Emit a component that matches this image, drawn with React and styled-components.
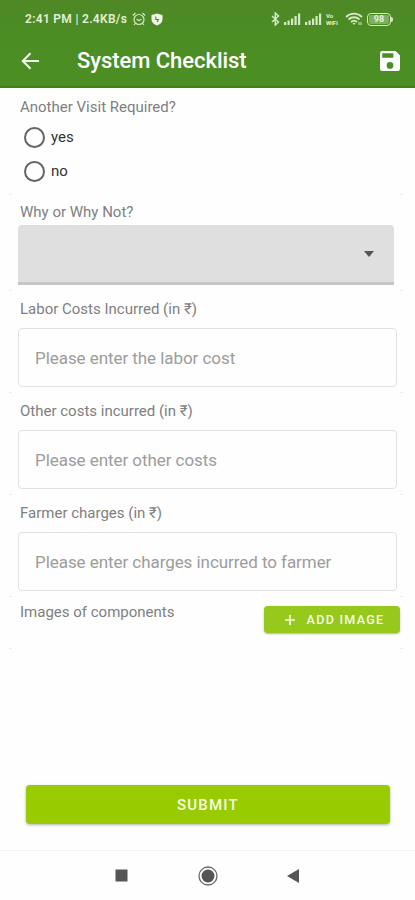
import styled, { createGlobalStyle } from 'styled-components';

const GlobalStyle = createGlobalStyle`
  * {
    box-sizing: border-box;
  }

  body {
    margin: 0;
    background-color: #fefefe;
    font-family: Roboto, 'Noto Sans', sans-serif;
  }
`;

const Screen = styled.div`
  display: flex;
  flex-direction: column;
  width: 415px;
  height: 900px;
  overflow: hidden;
`;

const Header = styled.header`
  flex: none;
  height: 88px;
  background: linear-gradient(#4e8825, #4b8d23 40px, #4b8f23);
  border-bottom: 2px solid #3f8210;
  color: #fff;
`;

const StatusBar = styled.div`
  display: flex;
  align-items: center;
  justify-content: space-between;
  height: 38px;
  padding: 0 22px 0 25px;
  color: #e3f0d6;
`;

const StatusGroup = styled.div`
  display: flex;
  align-items: center;
  gap: ${(props) => props.$gap}px;
`;

const Clock = styled.span`
  width: 102px;
  font-size: 12px;
  font-weight: 600;
  line-height: 14px;
  letter-spacing: 0.3px;
  white-space: nowrap;
`;

const NetLabel = styled.span`
  display: flex;
  flex-direction: column;
  width: 15px;
  font-size: 6px;
  font-weight: 700;
  line-height: 7px;
`;

const Battery = styled.span`
  display: flex;
  align-items: center;
  justify-content: center;
  width: 24px;
  height: 13px;
  border: 1.5px solid #d5e8c4;
  border-radius: 4px;
  background-color: #7fae5d;
  background-clip: content-box;
  padding: 1px;
  font-size: 9px;
  font-weight: 700;
  line-height: 8px;
`;

const BatteryWrap = styled.span`
  display: flex;
  align-items: center;

  &::after {
    content: '';
    width: 2px;
    height: 5px;
    border-radius: 0 2px 2px 0;
    background-color: #d5e8c4;
  }
`;

const Toolbar = styled.div`
  display: flex;
  align-items: center;
  height: 45px;
  padding: 0 15px 0 21px;
`;

const Title = styled.h1`
  flex: 1;
  margin: 0 0 0 37px;
  font-size: 22px;
  font-weight: 500;
  line-height: 28px;
  letter-spacing: -0.05px;
  white-space: nowrap;
`;

const Form = styled.main`
  flex: none;
  padding: 1px 12px 0 9px;
`;

const Card = styled.section`
  position: relative;
  height: ${(props) => props.$height}px;
  padding: ${(props) => props.$top}px 0 0 9px;

  &::before,
  &::after {
    content: '';
    position: absolute;
    bottom: 0;
    width: 3px;
    height: 1px;
    background-color: #ededed;
  }

  &::before {
    left: 0;
  }

  &::after {
    right: 0;
  }
`;

const Label = styled.div`
  padding-left: 2px;
  color: #7f7f7f;
  font-size: 15px;
  line-height: 18px;
  white-space: nowrap;
`;

const Options = styled.div`
  padding-top: 4px;
`;

const Option = styled.label`
  display: flex;
  align-items: center;
  height: 34px;
  padding-left: 6px;
  color: #333;
  font-size: 15px;
`;

const Radio = styled.span`
  width: 21px;
  height: 21px;
  margin-right: 6px;
  border: 2px solid #646464;
  border-radius: 50%;
`;

const Select = styled.div`
  display: flex;
  align-items: center;
  justify-content: flex-end;
  width: 376px;
  height: 60px;
  margin-top: 4px;
  padding-right: 20px;
  border-bottom: 3px solid #c6c6c6;
  border-radius: 4px 4px 0 0;
  background-color: #dfdfdf;
`;

const Field = styled.div`
  display: flex;
  align-items: center;
  width: 379px;
  height: 59px;
  margin-top: 10px;
  padding-left: 16px;
  border: 1px solid #e1e1e1;
  border-radius: 4px;
  color: #9c9c9c;
  font-size: 17px;
  letter-spacing: -0.06px;
  white-space: nowrap;
`;

const ImagesRow = styled.div`
  display: flex;
  justify-content: space-between;
  padding-right: 3px;
`;

const Button = styled.button`
  display: flex;
  align-items: center;
  justify-content: center;
  border: 0;
  border-radius: 4px;
  color: #f6fbe4;
  font-family: inherit;
  font-weight: 500;
  white-space: nowrap;
`;

const AddButton = styled(Button)`
  width: 136px;
  height: 27px;
  margin-top: 3px;
  gap: 12px;
  padding: 0 0 0 5px;
  background-color: #96c91c;
  box-shadow: 0 1px 2px rgba(0, 0, 0, 0.3);
  font-size: 12.5px;
  letter-spacing: 1.3px;
`;

const SubmitButton = styled(Button)`
  flex: none;
  width: 364px;
  height: 39px;
  margin: auto 0 26px 26px;
  background-color: #98cb00;
  box-shadow: 0 1px 3px rgba(0, 0, 0, 0.3);
  font-size: 15px;
  letter-spacing: 1.2px;
`;

const NavBar = styled.nav`
  display: flex;
  flex: none;
  align-items: center;
  height: 50px;
  padding-left: 115px;
  border-top: 1px solid #f3f3f3;
`;

const NavIcon = styled.svg`
  margin-right: ${(props) => props.$after || 0}px;
`;

const Signal = () => (
  <svg width="17" height="12" viewBox="0 0 17 12" fill="#d5e8c4">
    <path d="M0 9h2.2v3H0zM3.500 7.500h2.200V12H3.500zM7 5.500h2.200V12H7zM10.500 3h2.200v9h-2.200zM14 .500h2.200V12H14z" />
  </svg>
);

const fields = [
  {
    label: 'Labor Costs Incurred (in ₹)',
    placeholder: 'Please enter the labor cost',
  },
  { label: 'Other costs incurred (in ₹)', placeholder: 'Please enter other costs' },
  {
    label: 'Farmer charges (in ₹)',
    placeholder: 'Please enter charges incurred to farmer',
  },
];

export default function App() {
  return (
    <Screen>
      <GlobalStyle />
      <Header>
        <StatusBar>
          <StatusGroup $gap={5}>
            <Clock>2:41 PM | 2.4KB/s</Clock>
            <svg width="14" height="14" viewBox="0 0 14 14" fill="none" stroke="#d5e8c4" strokeWidth="1.2">
              <circle cx="7" cy="7.5" r="5" />
              <path d="M4.500 7.200 7 8.500l2.500-1.300M.8 3.500 3.500 1M13.200 3.500 10.500 1M3.200 11.500 2 13M10.800 11.500 12 13" />
            </svg>
            <svg width="12" height="13" viewBox="0 0 12 13">
              <path d="M6 .5 11.500 2v4.500c0 3-2.500 5-5.500 6-3-1-5.500-3-5.500-6V2z" fill="#eef6e6" />
              <path d="M4.800 3.500v3h2.700L6 9" fill="none" stroke="#4b8d23" strokeWidth="1.1" />
            </svg>
          </StatusGroup>
          <StatusGroup $gap={4}>
            <svg width="9" height="14" viewBox="0 0 9 14" fill="none" stroke="#d5e8c4" strokeWidth="1.5">
              <path d="m1 4 6.500 6L4.300 13V1l3.200 3L1 10" />
            </svg>
            <Signal />
            <Signal />
            <NetLabel>
              <span>Vo</span>
              <span>WiFi</span>
            </NetLabel>
            <svg width="18" height="14" viewBox="0 0 18 14" fill="none" stroke="#d5e8c4" strokeWidth="1.8">
              <path d="M1 5c4.500-4.500 11.500-4.500 16 0M3.500 7.500c3.200-3 7.800-3 11 0M6 10c2-1.700 4-1.700 6 0" />
              <path d="m7.500 11 1.500 2 1.500-2z" fill="#d5e8c4" stroke="none" />
              <path d="M14 10v3M16 10v3" strokeWidth="1" />
            </svg>
            <BatteryWrap>
              <Battery>98</Battery>
            </BatteryWrap>
          </StatusGroup>
        </StatusBar>
        <Toolbar>
          <svg width="19" height="18" viewBox="0 0 19 18" fill="none" stroke="#f7fbf3" strokeWidth="2">
            <path d="M18 9H2M9.500 1.300 1.800 9l7.700 7.700" />
          </svg>
          <Title>System Checklist</Title>
          <svg width="20" height="20" viewBox="3 3 18 18" fill="#fff">
            <path d="M17 3H5a2 2 0 0 0-2 2v14a2 2 0 0 0 2 2h14a2 2 0 0 0 2-2V7zm-5 16a3 3 0 1 1 0-6 3 3 0 0 1 0 6zm3-10H5V5h10z" />
          </svg>
        </Toolbar>
      </Header>

      <Form>
        <Card $height={106} $top={9}>
          <Label>Another Visit Required?</Label>
          <Options>
            <Option>
              <Radio />
              yes
            </Option>
            <Option>
              <Radio />
              no
            </Option>
          </Options>
        </Card>
        <Card $height={96} $top={8}>
          <Label>Why or Why Not?</Label>
          <Select>
            <svg width="10" height="6" viewBox="0 0 10 6">
              <path d="M0 0h10L5 6z" fill="#555" />
            </svg>
          </Select>
        </Card>
        {fields.map((field) => (
          <Card key={field.label} $height={102} $top={9}>
            <Label>{field.label}</Label>
            <Field>{field.placeholder}</Field>
          </Card>
        ))}
        <Card $height={52} $top={6}>
          <ImagesRow>
            <Label>Images of components</Label>
            <AddButton>
              <svg width="10" height="10" viewBox="0 0 10 10" stroke="#f6fbe4" strokeWidth="1.7">
                <path d="M5 0v10M0 5h10" />
              </svg>
              ADD IMAGE
            </AddButton>
          </ImagesRow>
        </Card>
      </Form>

      <SubmitButton>SUBMIT</SubmitButton>

      <NavBar>
        <NavIcon $after={70} width="13" height="13" viewBox="0 0 13 13">
          <path d="M.5.500h12v12H.500z" fill="#555" />
        </NavIcon>
        <NavIcon $after={69} width="20" height="20" viewBox="0 0 20 20">
          <circle cx="10" cy="10" r="9" fill="none" stroke="#6a6a6a" strokeWidth="1.3" />
          <circle cx="10" cy="10" r="6.5" fill="#555" />
        </NavIcon>
        <NavIcon width="12" height="14" viewBox="0 0 12 14">
          <path d="M12 0v14L0 7z" fill="#555" />
        </NavIcon>
      </NavBar>
    </Screen>
  );
}
